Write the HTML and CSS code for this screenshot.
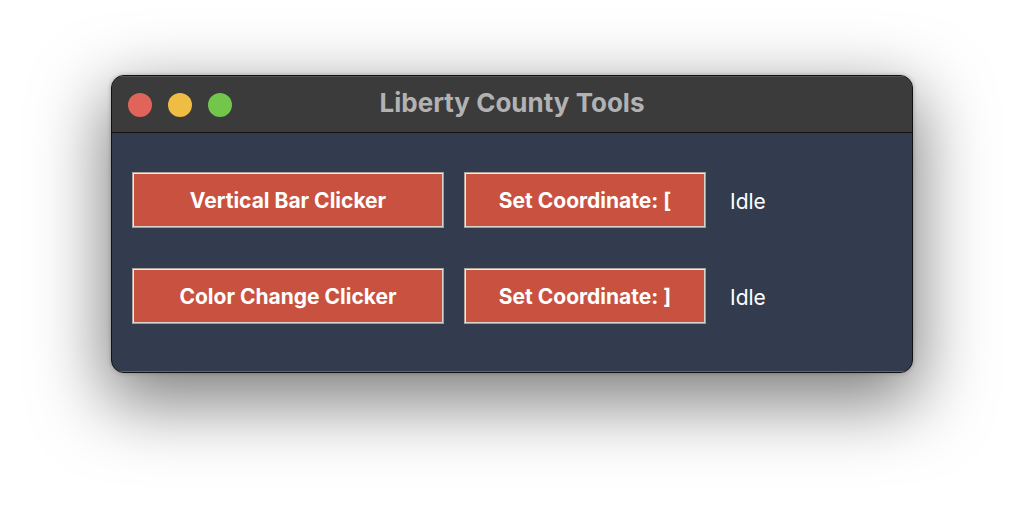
FILE: index.html
```html
<!DOCTYPE html>
<html>
<head>
<meta charset="utf-8">
<link rel="stylesheet" href="styles.css">
</head>
<body>
<div class="window">
  <div class="titlebar">
    <div class="lights">
      <span class="light red"></span>
      <span class="light yellow"></span>
      <span class="light green"></span>
    </div>
    <div class="title">Liberty County Tools</div>
  </div>
  <div class="content">
    <div class="row">
      <button class="btn wide">Vertical Bar Clicker</button>
      <button class="btn narrow">Set Coordinate: [</button>
      <span class="status">Idle</span>
    </div>
    <div class="row">
      <button class="btn wide">Color Change Clicker</button>
      <button class="btn narrow">Set Coordinate: ]</button>
      <span class="status">Idle</span>
    </div>
  </div>
</div>
</body>
</html>
```
FILE: styles.css
```css
html, body {
  margin: 0;
  padding: 0;
  background: #ffffff;
}
body {
  width: 1024px;
  height: 520px;
  overflow: hidden;
  padding-top: 75px;
  padding-left: 111px;
  box-sizing: border-box;
  font-family: Inter, "Liberation Sans", sans-serif;
}
.window {
  width: 802px;
  height: 298px;
  box-sizing: border-box;
  border: 1px solid #111;
  border-radius: 13px;
  overflow: hidden;
  background: #323c4e;
  box-shadow: 0 24px 70px 6px rgba(0,0,0,0.5), 0 0 4px rgba(0,0,0,0.25);
  display: flex;
  flex-direction: column;
}
.titlebar {
  height: 56px;
  background: #3b3b3b;
  border-bottom: 1px solid #111;
  display: flex;
  align-items: center;
  position: relative;
  box-shadow: inset 0 1px 0 #555;
}
.lights {
  display: flex;
  gap: 16px;
  padding-left: 16px;
  padding-top: 1px;
}
.light {
  width: 24px;
  height: 24px;
  border-radius: 50%;
  display: block;
}
.red { background: #e1645b; }
.yellow { background: #efbd43; }
.green { background: #72c64c; }
.title {
  position: absolute;
  left: 0;
  right: 0;
  top: 0;
  bottom: 0;
  display: flex;
  align-items: center;
  justify-content: center;
  color: #b2b2b2;
  font-weight: 700;
  font-size: 26px;
  padding-bottom: 3px;
  pointer-events: none;
}
.content {
  flex: 1;
  padding: 39px 20px 0 20px;
  display: flex;
  flex-direction: column;
  gap: 40px;
  box-shadow: inset 0 -1px 0 #5b6679;
}
.row {
  display: flex;
  align-items: center;
  height: 56px;
}
.btn {
  height: 56px;
  box-sizing: border-box;
  background: #c8523f;
  color: #ffffff;
  font-family: Inter, "Liberation Sans", sans-serif;
  font-weight: 700;
  font-size: 21px;
  border: 1px solid;
  border-color: #a7a7a0 #9f9f98 #9f9f98 #a7a7a0;
  box-shadow: inset 1px 1px 0 #ecece8, inset -1px -1px 0 #d4d4cc;
  padding: 1px 0 0 0;
  margin: 0;
}
.wide { width: 312px; }
.narrow { width: 242px; margin-left: 20px; }
.status {
  margin-left: 24px;
  color: #ffffff;
  font-size: 21px;
  font-weight: 400;
  padding-top: 3px;
}
```
